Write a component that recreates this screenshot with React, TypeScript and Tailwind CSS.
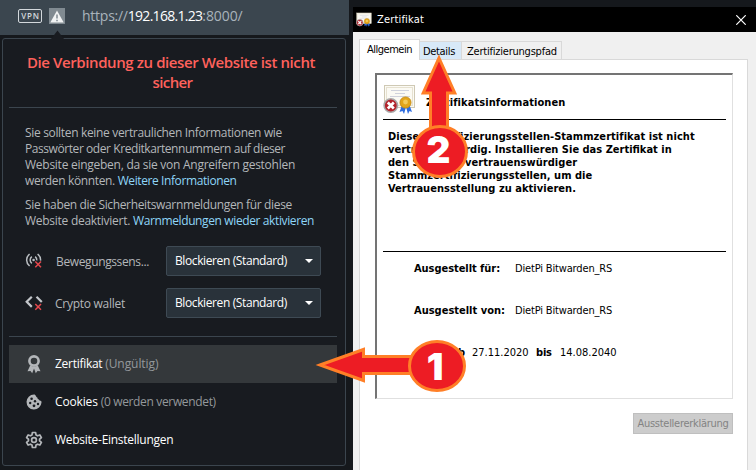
import type { ReactNode } from "react";

const UI = "font-['Open_Sans','Noto_Sans',sans-serif]";
const DLG = "font-['DejaVu_Sans_Condensed','DejaVu_Sans',sans-serif]";

function MotionIcon() {
  return (
    <svg width="19" height="18" viewBox="0 0 19 18" fill="none" stroke="#b9bdc1" strokeWidth="1.500">
      <path d="M4.600 2C0.600 5.400 0.600 10.400 4.600 14" />
      <path d="M6.800 4.600C4.600 6.400 4.600 9.400 6.800 11.400" />
      <path d="M12.600 2C15 4 15.800 6.200 15.500 8.600" />
      <path d="M10.200 4.600C11.400 5.600 11.900 6.800 11.800 8.400" />
      <circle cx="8.600" cy="8" r="1.300" fill="#b9bdc1" stroke="none" />
      <path d="M10.300 9.500L16 15.200M16 9.500L10.300 15.200" stroke="#e5484d" strokeWidth="1.500" />
    </svg>
  );
}

function WalletIcon() {
  return (
    <svg width="19" height="18" viewBox="0 0 19 18" fill="none" stroke="#c3c6ca" strokeWidth="2.200">
      <path d="M6.800 2.700L1.700 7.800L6.800 12.900" />
      <path d="M11.500 2.700L16.800 8" />
      <path d="M10.300 10L16 15.700M16 10L10.300 15.700" stroke="#e5484d" strokeWidth="1.500" />
    </svg>
  );
}

function RibbonIcon() {
  return (
    <svg width="16" height="20" viewBox="0 0 16 20">
      <circle cx="8" cy="7" r="4.600" fill="none" stroke="#b3b6b9" strokeWidth="2.600" />
      <path d="M4.200 11.500L1.500 17.200L4.500 17L6.200 19.200L8 14.500L9.800 19.200L11.500 17L14.500 17.200L11.800 11.500L8 13Z" fill="#b3b6b9" />
    </svg>
  );
}

function CookieIcon() {
  return (
    <svg width="16" height="16" viewBox="0 0 16 16" fill="#181b20">
      <path d="M8 0.500C10 0.500 9.600 3 11.300 3.400C11.500 5.400 13.200 5.200 13.500 6.500C15 6.600 15.600 7 15.500 8.500A7.500 7.500 0 1 1 8 0.500Z" fill="#b3b6b9" />
      <circle cx="5.600" cy="4.800" r="1.300" />
      <circle cx="9" cy="7.200" r="1.200" />
      <circle cx="4.200" cy="9" r="1.200" />
      <circle cx="8" cy="11.800" r="1.400" />
      <circle cx="12" cy="10" r="1.200" />
    </svg>
  );
}

function GearIcon() {
  return (
    <svg width="18" height="18" viewBox="0 0 24 24" fill="none" stroke="#b3b6b9" strokeWidth="2.300" strokeLinejoin="round">
      <path d="M9.900 2h4.200l.6 3.200 2 1.200 3.100-1.100 2.100 3.600-2.500 2.100v2l2.500 2.100-2.100 3.600-3.100-1.100-2 1.200-.6 3.200H9.900l-.6-3.200-2-1.200-3.100 1.100-2.100-3.600L4.600 13v-2L2.100 8.900l2.100-3.600 3.100 1.100 2-1.200z" />
      <circle cx="12" cy="12" r="3.200" />
    </svg>
  );
}

function CertificateIcon({ size }: { size: "small" | "large" }) {
  return (
    <svg className={size === "large" ? "h-[30px] w-[33px]" : "h-4 w-4"} viewBox="0 0 33 30">
      <rect x="1.500" y="0.500" width="30" height="22" fill="#fbfaf4" stroke="#cfc9b4" />
      <rect x="3.500" y="2.500" width="26" height="18" fill="none" stroke="#e6e1d0" />
      <path d="M8 5.500H26M12 8.500H22M7 11.500H27" stroke="#c5c8d6" strokeWidth="0.800" />
      <path d="M19 20L16.500 27L19.500 26L21 29L23 22L25 29L26.500 26L29 27L26.500 20Z" fill="#2f6de0" />
      <circle cx="22.500" cy="17.500" r="5.500" fill="#e3a51b" stroke="#c98f14" />
      <circle cx="22.500" cy="17" r="2.400" fill="#f3cb5c" />
      <circle cx="7.800" cy="20.500" r="6.700" fill="#b3232b" stroke="#a9a9a9" strokeWidth="1.600" />
      <path d="M4.800 17.500L10.800 23.500M10.800 17.500L4.800 23.500" stroke="#fff" strokeWidth="2.700" />
    </svg>
  );
}

function Permission({ icon, label }: { icon: ReactNode; label: ReactNode }) {
  return (
    <div className="flex h-[30px] items-center">
      <span className="w-[30px]">{icon}</span>
      <span className="mt-px w-[111px] text-[#b4b7ba]">{label}</span>
      <div className="flex h-[30px] w-[155px] items-center justify-between rounded-[2px] border border-[#3e4a54] bg-[#29323a] pr-[7px] pl-2 font-medium text-white">
        <span className="tracking-[-0.39px]">Blockieren (Standard)</span>
        <svg width="8" height="4" viewBox="0 0 8 4"><path d="M0 0H8L4 4Z" fill="#fff" /></svg>
      </div>
    </div>
  );
}

function MenuRow({ icon, active, children }: { icon: ReactNode; active?: boolean; children: ReactNode }) {
  return (
    <div className={`flex h-[38px] items-center pl-4 ${active ? "bg-[#34383b]" : ""}`}>
      <span className="flex w-[18px] justify-center">{icon}</span>
      <span className="ml-3 font-medium whitespace-pre text-white">{children}</span>
    </div>
  );
}

function BrowserPane() {
  return (
    <div className={`flex w-[353px] flex-col ${UI}`}>
      <div className="flex h-[35px] w-[349px] items-start bg-[#3b464f] pl-[18px] text-[#a9b3bb]">
        <span className="mt-[9px] flex h-[14px] w-6 items-center justify-center rounded-[2px] border border-[#d3d8dc] pl-px text-[8px] font-semibold tracking-[0.8px] text-[#d3d8dc]">VPN</span>
        <span className="mt-2 ml-[7px] flex size-4 items-center justify-center bg-[#808a91]">
          <svg width="14" height="13" viewBox="0 0 14 13">
            <path d="M7 0.500L13.700 12.500H0.300Z" fill="#f1f3f4" />
            <path d="M7 4.500V8.500M7 9.800V11.300" stroke="#808a91" strokeWidth="1.500" />
          </svg>
        </span>
        <span className="mt-[6px] ml-[17px] text-[14px] leading-5 whitespace-nowrap">
          <span className="tracking-[-0.25px]">https://</span>
          <span className="font-medium tracking-[-0.71px] text-white">192.168.1.23</span>
          <span className="tracking-[-0.08px]">:8000/</span>
        </span>
      </div>
      <div className="relative mt-[3px] ml-[2px] h-[428px] w-[344px] rounded-[3px] border border-[#3b454e] bg-[#181b20] pr-2 pl-[6px] text-[12px] leading-4">
        <svg className="absolute top-[-9px] left-[47px]" width="15" height="10" viewBox="0 0 15 10">
          <path d="M1 9.500V9L7.500 0.500L14 9V10H1Z" fill="#181b20" />
        </svg>
        <div className="mt-[13px] mr-1 text-center text-[15px] leading-5 font-semibold text-[#ff615c]">
          <div className="tracking-[-0.4px] whitespace-nowrap">Die Verbindung zu dieser Website ist nicht</div>
          <div className="ml-[3px] tracking-[-0.6px]">sicher</div>
        </div>
        <div className="mt-[15px] border-t border-[#3b454e]" />
        <div className="mt-[17px] pl-4 whitespace-nowrap text-[#b4b7ba]">
          <div className="tracking-[-0.333px]">Sie sollten keine vertraulichen Informationen wie</div>
          <div className="tracking-[-0.428px]">Passwörter oder Kreditkartennummern auf dieser</div>
          <div className="tracking-[-0.26px]">Website eingeben, da sie von Angreifern gestohlen</div>
          <div className="tracking-[-0.36px]">werden könnten. <span className="font-medium tracking-[-0.4px] text-[#8fd6f8]">Weitere Informationen</span></div>
          <div className="mt-2 tracking-[-0.348px]">Sie haben die Sicherheitswarnmeldungen für diese</div>
          <div className="tracking-[-0.27px]">Website deaktiviert. <span className="font-medium tracking-[-0.38px] text-[#8fd6f8]">Warnmeldungen wieder aktivieren</span></div>
        </div>
        <div className="mt-[17px] flex flex-col gap-3 pl-4">
          <Permission icon={<MotionIcon />} label={<span className="ml-px tracking-[-0.375px]">Bewegungssens...</span>} />
          <Permission icon={<WalletIcon />} label={<span className="tracking-[-0.27px]">Crypto wallet</span>} />
        </div>
        <div className="mt-[18px] mb-2 border-t border-[#3b454e]" />
        <MenuRow icon={<RibbonIcon />} active>
          <span className="tracking-[-0.28px]">Zertifikat </span>
          <span className="font-normal tracking-[-0.06px] text-[#94989b]">(Ungültig)</span>
        </MenuRow>
        <MenuRow icon={<CookieIcon />}>
          <span className="tracking-[-0.15px]">Cookies </span>
          <span className="font-normal tracking-[-0.345px] text-[#94989b]">(0 werden verwendet)</span>
        </MenuRow>
        <MenuRow icon={<GearIcon />}><span className="tracking-[-0.27px]">Website-Einstellungen</span></MenuRow>
      </div>
    </div>
  );
}

function CertificateDialog() {
  return (
    <div className={`mt-[7px] flex w-[403px] flex-col bg-[#f0f0f0] text-[11px] leading-[13px] whitespace-nowrap text-black ${DLG}`}>
      <div className="flex h-[25px] items-center bg-black pr-[10px] pl-[3px] text-white">
        <CertificateIcon size="small" />
        <span className="ml-[5px] tracking-[0.17px]">Zertifikat</span>
        <svg className="ml-auto" width="10" height="10" viewBox="0 0 10 10"><path d="M0.300 0.300L9.700 9.700M9.700 0.300L0.300 9.700" stroke="#fff" strokeWidth="1.200" /></svg>
      </div>
      <div className="flex h-[27px] items-end pl-[6px]">
        <div className="relative z-10 -mb-px h-[21px] w-[61px] border border-b-0 border-[#d9d9d9] bg-white pt-[3px] pl-[7px] tracking-[-0.49px]">Allgemein</div>
        <div className="h-[18px] w-[41px] border-t border-[#d9d9d9] bg-[#d8e9f8] pt-[3px] pl-[3px] tracking-[-0.33px]">Details</div>
        <div className="h-[18px] w-[101px] border border-b-0 border-[#d9d9d9] pt-[3px] pl-[5px] tracking-[-0.22px]">Zertifizierungspfad</div>
      </div>
      <div className="ml-[6px] flex w-[389px] flex-1 flex-col border border-b-0 border-[#d9d9d9] bg-white pt-[13px] pl-[15px]">
        <div className="h-[326px] w-[358px] border-t-2 border-r border-b border-l-2 border-t-[#747474] border-r-[#e0e0e0] border-b-[#e0e0e0] border-l-[#747474] pl-[6px] font-bold">
          <div className="flex h-[45px] w-[343px] border-b border-black pt-[10px]">
            <CertificateIcon size="large" />
            <span className="mt-[11px] ml-[10px] tracking-[0.07px]">Zertifikatsinformationen</span>
          </div>
          <div className="mt-[10px] h-[121px] w-[343px] pl-[5px]">
            <div className="tracking-[0.05px]">Dieses Zertifizierungsstellen-Stammzertifikat ist nicht</div>
            <div>vertrauenswürdig. Installieren Sie das Zertifikat in</div>
            <div className="tracking-[0.04px]">den Speicher vertrauenswürdiger</div>
            <div className="tracking-[0.03px]">Stammzertifizierungsstellen, um die</div>
            <div className="tracking-[0.03px]">Vertrauensstellung zu aktivieren.</div>
          </div>
          <div className="w-[343px] border-t border-black pt-[10px] pl-[31px]">
            <div className="flex h-[42px]">
              <span className="w-[101px] tracking-[-0.05px]">Ausgestellt für:</span>
              <span className="font-normal tracking-[-0.16px]">DietPi Bitwarden_RS</span>
            </div>
            <div className="flex h-[42px]">
              <span className="w-[101px]">Ausgestellt von:</span>
              <span className="font-normal tracking-[-0.16px]">DietPi Bitwarden_RS</span>
            </div>
            <div className="flex">
              <span className="w-[58px]">Gültig ab</span>
              <span className="w-[64px] font-normal">27.11.2020</span>
              <span className="w-[24px] tracking-[-0.2px]">bis</span>
              <span className="font-normal">14.08.2040</span>
            </div>
          </div>
        </div>
        <div className="mt-[14px] ml-[258px] flex h-[21px] w-[100px] items-center justify-center border border-[#bfbfbf] bg-[#cccccc] tracking-[-0.28px] text-[#838383]">Ausstellererklärung</div>
      </div>
    </div>
  );
}

/* Numbered step markers laid over both windows. */
function StepMarkers() {
  return (
    <svg className="absolute inset-0" width="756" height="470" viewBox="0 0 756 470" fill="#ed1c24" stroke="#ff7f27" strokeWidth="3">
      <path d="M320 365L363.500 349.500V356.500H415V373.500H363.500V380.500Z" />
      <ellipse cx="437" cy="366" rx="27.500" ry="24.500" />
      <path d="M439 58L454.800 93H447.500V135H430.500V93H423.200Z" />
      <ellipse cx="440" cy="151.500" rx="26.500" ry="25" />
      <g className="font-['Inter',sans-serif] text-[37px] font-black" fill="#fff" stroke="none" textAnchor="middle">
        <text x="435" y="380">1</text>
        <text x="438.500" y="163">2</text>
      </g>
    </svg>
  );
}

export default function App() {
  return (
    <div className="relative flex h-[470px] w-[756px] overflow-hidden bg-[#15181c]">
      <BrowserPane />
      <CertificateDialog />
      <StepMarkers />
    </div>
  );
}
